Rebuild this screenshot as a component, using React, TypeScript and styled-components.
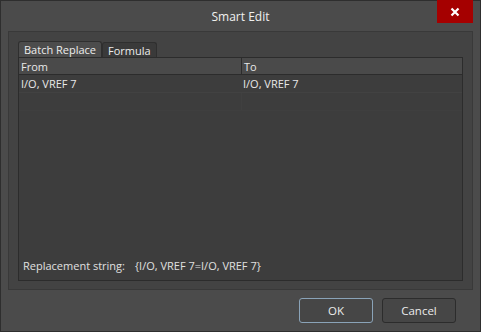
import React from "react";
import styled, { createGlobalStyle } from "styled-components";

const Global = createGlobalStyle`
  html, body { margin: 0; padding: 0; background: #2b2b2b; }
  body { font-family: "Open Sans", "Noto Sans", sans-serif; }
`;

const Window = styled.div`
  width: 481px;
  height: 332px;
  box-sizing: border-box;
  background: #4b4b4b;
  border: 1px solid #2e2e2e;
  display: flex;
  flex-direction: column;
  color: #e6e6e6;
  font-size: 11px;
`;

const TitleBar = styled.div`
  height: 30px;
  position: relative;
  display: flex;
  align-items: center;
  justify-content: center;
  font-size: 12px;
  color: #f0f0f0;
`;

const CloseButton = styled.div`
  position: absolute;
  right: 7px;
  top: -1px;
  width: 36px;
  height: 23px;
  background: #a50000;
  display: flex;
  align-items: center;
  justify-content: center;
`;

const Panel = styled.div`
  margin: 0 7px 0 7px;
  height: 259px;
  box-sizing: border-box;
  background: #434343;
  border: 1px solid #393939;
  padding: 9px 9px 8px 9px;
  display: flex;
  flex-direction: column;
`;

const Tabs = styled.div`
  display: flex;
  height: 16px;
  align-items: flex-end;
`;

const Tab = styled.div<{ $active?: boolean }>`
  height: ${(p) => (p.$active ? "16px" : "15px")};
  box-sizing: border-box;
  padding: 0 5px 0 5px;
  display: flex;
  align-items: center;
  background: ${(p) => (p.$active ? "#4c4c4c" : "#3a3a3a")};
  border: 1px solid #2f2f2f;
  border-bottom: none;
  border-radius: 3px 3px 0 0;
  color: #ececec;
  font-size: 11px;
`;

const Grid = styled.div`
  flex: 1;
  box-sizing: border-box;
  background: #3d3d3d;
  border: 1px solid #2c2c2c;
  display: flex;
  flex-direction: column;
`;

const Row = styled.div<{ $header?: boolean; $ghost?: boolean }>`
  display: grid;
  grid-template-columns: 222px 1fr;
  height: ${(p) => (p.$header ? "16px" : "17px")};
  background: ${(p) => (p.$header ? "#4a4a4a" : "#3d3d3d")};
  border-bottom: 1px solid
    ${(p) => (p.$header ? "#2c2c2c" : p.$ghost ? "#3f3f3f" : "#424242")};
`;

const Cell = styled.div<{ $divider?: boolean; $faint?: boolean }>`
  display: flex;
  align-items: center;
  padding-left: 2px;
  border-left: ${(p) =>
    p.$divider ? "1px solid #2c2c2c" : p.$faint ? "1px solid #404040" : "none"};
  color: #e8e8e8;
  font-size: 11px;
  white-space: nowrap;
`;

const EmptyArea = styled.div`
  flex: 1;
`;

const Footer = styled.div`
  height: 28px;
  display: flex;
  align-items: center;
  padding-left: 4px;
  gap: 10px;
  color: #e0e0e0;
  box-sizing: border-box;
  padding-bottom: 2px;
`;

const ButtonBar = styled.div`
  flex: 1;
  display: flex;
  justify-content: flex-end;
  align-items: center;
  gap: 9px;
  padding: 0 24px 0 0;
`;

const Button = styled.div<{ $default?: boolean }>`
  width: 74px;
  height: 25px;
  box-sizing: border-box;
  border-radius: 3px;
  border: 1px solid ${(p) => (p.$default ? "#8aa3b8" : "#2c2c2c")};
  background: #464646;
  display: flex;
  align-items: center;
  justify-content: center;
  color: #ececec;
  font-size: 11.5px;
`;

export default function App() {
  return (
    <>
      <Global />
      <Window>
        <TitleBar>
          Smart Edit
          <CloseButton>
            <svg width="10" height="10" viewBox="0 0 10 10">
              <path d="M1.5 1.5 L8.5 8.5 M8.5 1.5 L1.5 8.5" stroke="#fff" strokeWidth="2.2" />
            </svg>
          </CloseButton>
        </TitleBar>
        <Panel>
          <Tabs>
            <Tab $active>Batch Replace</Tab>
            <Tab>Formula</Tab>
          </Tabs>
          <Grid>
            <Row $header>
              <Cell>From</Cell>
              <Cell $divider>To</Cell>
            </Row>
            <Row>
              <Cell>I/O, VREF 7</Cell>
              <Cell>I/O, VREF 7</Cell>
            </Row>
            <Row $ghost>
              <Cell />
              <Cell $faint />
            </Row>
            <EmptyArea />
            <Footer>
              <span>Replacement string:</span>
              <span>{"{I/O, VREF 7=I/O, VREF 7}"}</span>
            </Footer>
          </Grid>
        </Panel>
        <ButtonBar>
          <Button $default>OK</Button>
          <Button>Cancel</Button>
        </ButtonBar>
      </Window>
    </>
  );
}
